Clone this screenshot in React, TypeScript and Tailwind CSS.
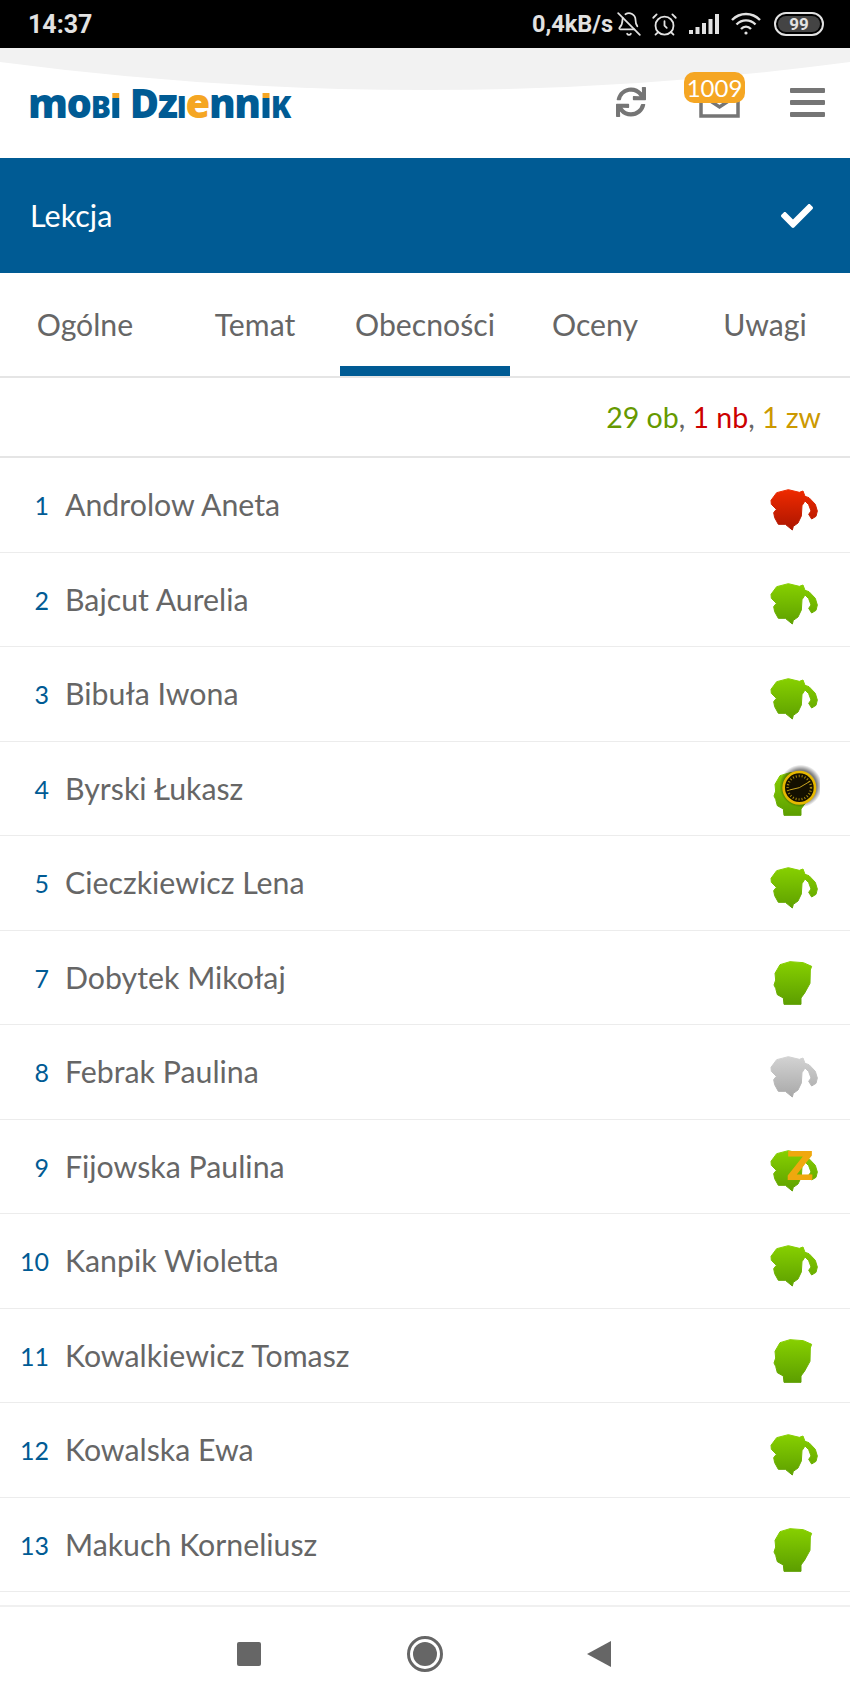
import React from 'react';
import { FaCheck, FaSync } from 'react-icons/fa';
import { AlarmClock, BellOff } from 'lucide-react';

type Kind = 'girl' | 'boy';
type Mark = 'clock' | 'z';
type Student = { nr: number; name: string; kind: Kind; tone: 'green' | 'red' | 'grey'; mark?: Mark };

const students: Student[] = [
  { nr: 1, name: 'Androlow Aneta', kind: 'girl', tone: 'red' },
  { nr: 2, name: 'Bajcut Aurelia', kind: 'girl', tone: 'green' },
  { nr: 3, name: 'Bibuła Iwona', kind: 'girl', tone: 'green' },
  { nr: 4, name: 'Byrski Łukasz', kind: 'boy', tone: 'green', mark: 'clock' },
  { nr: 5, name: 'Cieczkiewicz Lena', kind: 'girl', tone: 'green' },
  { nr: 7, name: 'Dobytek Mikołaj', kind: 'boy', tone: 'green' },
  { nr: 8, name: 'Febrak Paulina', kind: 'girl', tone: 'grey' },
  { nr: 9, name: 'Fijowska Paulina', kind: 'girl', tone: 'green', mark: 'z' },
  { nr: 10, name: 'Kanpik Wioletta', kind: 'girl', tone: 'green' },
  { nr: 11, name: 'Kowalkiewicz Tomasz', kind: 'boy', tone: 'green' },
  { nr: 12, name: 'Kowalska Ewa', kind: 'girl', tone: 'green' },
  { nr: 13, name: 'Makuch Korneliusz', kind: 'boy', tone: 'green' },
];

const tabs = ['Ogólne', 'Temat', 'Obecności', 'Oceny', 'Uwagi'];

const tones = {
  green: ['#86cf00', '#5c9e00'],
  red: ['#ee2a00', '#a81400'],
  grey: ['#d2d2d2', '#a6a6a6'],
};

// traced from the reference at 3x, so one unit is a third of a pixel
const girlPoints =
  '33,58 50,35 85,26 118,34 129,30 135,46 147,50 166,70 172,90 168,106 155,114 146,100 153,90 146,71 135,60 126,74 124,105 114,126 100,136 97,147 76,130 55,130 44,110 41,95 49,85 34,70';
const boyPoints =
  '45,61 60,35 90,26 130,29 155,40 151,51 150,91 134,120 123,135 123,154 72,154 70,135 52,125 47,106 42,96 47,81';

function Silhouette({ student }: { student: Student }) {
  const [top, bottom] = tones[student.tone];
  const id = `grad-${student.nr}`;
  return (
    <svg width="60" height="60" viewBox="0 0 180 180" className="shrink-0 translate-y-[6px] blur-[0.4px]">
      <defs>
        <linearGradient id={id} gradientUnits="userSpaceOnUse" x1="0" y1="28" x2="0" y2="154">
          <stop offset="0" stopColor={top} />
          <stop offset="1" stopColor={bottom} />
        </linearGradient>
        <radialGradient id={`shadow-${student.nr}`}>
          <stop offset="0.75" stopColor="#000" stopOpacity="0.5" />
          <stop offset="1" stopColor="#000" stopOpacity="0" />
        </radialGradient>
      </defs>
      <polygon
        points={student.kind === 'girl' ? girlPoints : boyPoints}
        fill={`url(#${id})`}
        stroke={`url(#${id})`}
        strokeWidth="3"
        strokeLinejoin="round"
      />
      {student.mark === 'clock' && (
        <g>
          <circle cx="122" cy="66" r="64" fill={`url(#shadow-${student.nr})`} />
          <circle cx="118" cy="71" r="47" fill="#141000" stroke="#e6b800" strokeWidth="8" />
          <circle cx="118" cy="71" r="35" fill="none" stroke="#a88a10" strokeWidth="7" strokeDasharray="3 6" />
          <path d="M118 71 L150 52 M118 71 L88 78" stroke="#c9a520" strokeWidth="3" />
        </g>
      )}
      {student.mark === 'z' && (
        <text x="120" y="115" textAnchor="middle" fontFamily="'DejaVu Sans', sans-serif" fontWeight="700" fontSize="116" fill="#f0a80e">
          Z
        </text>
      )}
    </svg>
  );
}

function StatusBar() {
  return (
    <div className="h-12 shrink-0 bg-black flex items-center justify-between pl-[28px] pr-[26px] text-[#e2e2e2] font-['Roboto',sans-serif] font-bold text-[23.5px]">
      <span className="text-[25px] pt-[2px]">14:37</span>
      <div className="flex items-center">
        <span className="w-[84px] pt-[2px]">0,4kB/s</span>
        <BellOff size={26} strokeWidth={1.6} className="mr-[9px]" />
        <AlarmClock size={27} strokeWidth={1.6} className="mr-[11px]" />
        <svg width="30" height="22" viewBox="0 0 30 22" fill="#e2e2e2" className="mr-[11px]">
          <rect x="0" y="17" width="4" height="4" />
          <rect x="6.5" y="14" width="4" height="7" />
          <rect x="13" y="10" width="4" height="11" />
          <rect x="19.5" y="6" width="4" height="15" />
          <rect x="26" y="1" width="4" height="20" />
        </svg>
        <svg width="32" height="24" viewBox="0 0 32 24" fill="none" stroke="#e2e2e2" strokeWidth="2.4" className="mr-[12px]">
          <path d="M2 8 C10 0 22 0 30 8" />
          <path d="M6.5 12.5 C12 7 20 7 25.5 12.5" />
          <path d="M11 17 C14 14 18 14 21 17" />
          <circle cx="16" cy="21" r="1.6" fill="#e2e2e2" stroke="none" />
        </svg>
        <div className="w-[50px] h-[24px] rounded-full border-2 border-[#e2e2e2] p-[2px] flex">
          <div className="flex-1 rounded-full bg-[#444] flex items-center justify-center text-[17px] leading-none">99</div>
        </div>
      </div>
    </div>
  );
}

function Logo() {
  const dotted = "text-[36px] bg-[linear-gradient(#f5a623_0%,#f5a623_36%,#005b94_36%)] bg-clip-text text-transparent";
  return (
    <div className="flex items-baseline font-['Open_Sans',sans-serif] font-extrabold text-[#005b94] leading-none tracking-[-1.4px]">
      <span className="text-[40px]">
        mo<span className="text-[30px]">B</span>
        <span className={dotted}>I</span>
      </span>
      <span className="text-[40px] ml-[9px]">
        Dz<span className="text-[30px]">I</span>
        <span className="text-[#f5a623]">e</span>
        nn<span className={dotted}>I</span>
        <span className="text-[30px]">K</span>
      </span>
    </div>
  );
}

function Header() {
  return (
    <div className="relative h-[110px] shrink-0 bg-white flex items-center pl-[28px] pr-[25px]">
      <svg className="absolute left-0 top-0" width="850" height="50" viewBox="0 0 850 50">
        <path d="M0 0 H850 V14 Q425 70 0 14 Z" fill="#f2f2f2" />
      </svg>
      <div className="relative">
        <Logo />
      </div>
      <div className="relative ml-auto flex items-center -translate-y-[1px]">
        <FaSync size={30} color="#757575" />
        <div className="relative w-[41px] h-[32px] ml-[53px] mr-[50px]">
          <svg width="41" height="32" viewBox="0 0 41 32" fill="none" stroke="#757575" strokeWidth="3.5">
            <path d="M2 8 V30 H39 V8 Z" />
            <path d="M10 14 L20.5 21 L31 14" />
          </svg>
          <span className="absolute -top-[14px] left-[-15px] w-[61px] h-[31px] rounded-[10px] bg-[#f5a623] flex items-center justify-center text-white text-[24px] leading-none font-['Lato',sans-serif]">
            1009
          </span>
        </div>
        <div className="w-[35px] flex flex-col gap-[7px]">
          <div className="h-[5px] rounded-[1px] bg-[#757575]" />
          <div className="h-[5px] rounded-[1px] bg-[#757575]" />
          <div className="h-[5px] rounded-[1px] bg-[#757575]" />
        </div>
      </div>
    </div>
  );
}

export default function App() {
  return (
    <div className="w-[850px] h-[1700px] overflow-hidden bg-white flex flex-col font-['Lato',sans-serif] text-[#666]">
      <StatusBar />
      <Header />

      <div className="h-[115px] shrink-0 bg-[#005b94] flex items-center justify-between pl-[30px] pr-[37px] text-white text-[30.5px]">
        <span>Lekcja</span>
        <FaCheck size={32} />
      </div>

      <div className="h-[105px] shrink-0 flex border-b-2 border-[#e5e5e5]">
        {tabs.map((tab) => (
          <div
            key={tab}
            className={`flex-1 flex items-center justify-center text-[30.2px] ${tab === 'Obecności' ? 'shadow-[inset_0_-10px_0_#005b94]' : ''}`}
          >
            {tab}
          </div>
        ))}
      </div>

      <div className="h-[80px] shrink-0 flex items-center justify-end pr-[29px] border-b-2 border-[#e5e5e5] text-[28.5px]">
        <span className="text-[#669900]">29 ob</span>,&nbsp;
        <span className="text-[#cc0000]">1 nb</span>,&nbsp;
        <span className="text-[#cc9900]">1 zw</span>
      </div>

      <div className="flex-1 min-h-0">
        {students.map((s) => (
          <div key={s.nr} className="h-[94.5px] flex items-center pr-[30px] border-b border-[#ececec]">
            <span className="w-[49px] text-right text-[25px] pt-[2px] text-[#005b94]">{s.nr}</span>
            <span className="ml-[16px] text-[30.3px]">{s.name}</span>
            <div className="ml-auto">
              <Silhouette student={s} />
            </div>
          </div>
        ))}
      </div>

      <div className="h-[95px] shrink-0 bg-white border-t-2 border-[#f0f0f0] flex items-center justify-center gap-[146px] pr-[2px]">
        <div className="w-[24px] h-[24px] rounded-[2px] bg-[#666]" />
        <div className="w-[36px] h-[36px] rounded-full border-[3px] border-[#666] p-[3px]">
          <div className="w-full h-full rounded-full bg-[#666]" />
        </div>
        <svg width="24" height="26" viewBox="0 0 24 26" className="-ml-[2px]">
          <path d="M0 13 L24 0 V26 Z" fill="#666" />
        </svg>
      </div>
    </div>
  );
}
